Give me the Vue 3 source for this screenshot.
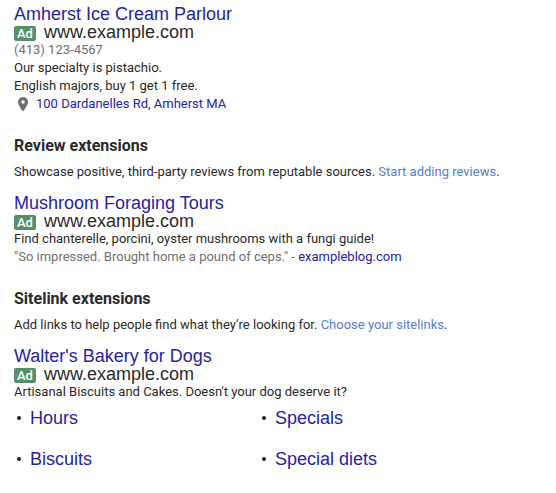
<script setup>
const sitelinks = ['Hours', 'Specials', 'Biscuits', 'Special diets']
</script>

<template>
  <main class="page">
    <article class="ad">
      <a class="title" href="#">Amherst Ice Cream Parlour</a>
      <div class="source"><span class="badge">Ad</span><span class="url">www.example.com</span></div>
      <p class="line muted">(413) 123-4567</p>
      <p class="line">Our specialty is pistachio.</p>
      <p class="line">English majors, buy 1 get 1 free.</p>
      <a class="line address" href="#">
        <svg class="pin" viewBox="0 0 12 16" aria-hidden="true">
          <path fill-rule="evenodd" d="M6 1a5 5 0 0 0-5 5C1 9.500 6 15.500 6 15.500s5-6 5-9.500a5 5 0 0 0-5-5zm0 3.200a1.800 1.800 0 1 1 0 3.600 1.800 1.800 0 0 1 0-3.600z" />
        </svg>
        <span>100 Dardanelles Rd, Amherst MA</span>
      </a>
    </article>

    <section>
      <h2 class="heading">Review extensions</h2>
      <p class="intro">Showcase positive, third-party reviews from reputable sources. <a class="action" href="#">Start adding reviews</a>.</p>
      <article class="ad">
        <a class="title" href="#">Mushroom Foraging Tours</a>
        <div class="source"><span class="badge">Ad</span><span class="url">www.example.com</span></div>
        <p class="line">Find chanterelle, porcini, oyster mushrooms with a fungi guide!</p>
        <p class="line muted">"So impressed. Brought home a pound of ceps." - <a href="#">exampleblog.com</a></p>
      </article>
    </section>

    <section>
      <h2 class="heading">Sitelink extensions</h2>
      <p class="intro">Add links to help people find what they’re looking for. <a class="action" href="#">Choose your sitelinks</a>.</p>
      <article class="ad">
        <a class="title" href="#">Walter's Bakery for Dogs</a>
        <div class="source"><span class="badge">Ad</span><span class="url">www.example.com</span></div>
        <p class="line">Artisanal Biscuits and Cakes. Doesn't your dog deserve it?</p>
        <ul class="sitelinks">
          <li v-for="name in sitelinks" :key="name"><a href="#">{{ name }}</a></li>
        </ul>
      </article>
    </section>
  </main>
</template>

<style>
body {
  background: #fff;
}
</style>

<style scoped>
.page {
  padding: 4px 14px 0;
  font-family: Roboto, sans-serif;
  font-size: 13px;
  color: #2a2a2a;
}
a {
  color: #2424a4;
  text-decoration: none;
}
p, h2, ul {
  margin: 0;
}
.title {
  display: block;
  font-family: "Liberation Sans", Arial, sans-serif;
  font-size: 18px;
  line-height: 20px;
}
.source {
  display: flex;
  align-items: center;
  gap: 8px;
  height: 17px;
}
.badge {
  margin-top: 2px;
  padding: 0 3px;
  border-radius: 2px;
  background: #569068;
  color: #fff;
  font-size: 13px;
  font-weight: 500;
  line-height: 15px;
}
.url {
  font-family: "Liberation Sans", Arial, sans-serif;
  font-size: 18px;
  line-height: 17px;
}
.line {
  line-height: 18px;
}
.muted {
  color: #707070;
}
.address {
  display: flex;
  align-items: center;
  gap: 7px;
}
.pin {
  width: 12px;
  height: 16px;
  margin-left: 3px;
  fill: #707070;
}
.heading {
  margin-top: 23px;
  font-size: 16px;
  font-weight: 700;
  line-height: 20px;
}
.intro {
  margin: 6px 0 11px;
  font-size: 13px;
  line-height: 20px;
}
.action {
  color: #5580cc;
}
.sitelinks {
  display: grid;
  grid-template-columns: 245px 1fr;
  row-gap: 21px;
  padding: 7px 0 0;
  list-style: none;
}
.sitelinks li {
  display: flex;
  align-items: center;
  gap: 9px;
  padding-left: 3px;
  font-family: "Liberation Sans", Arial, sans-serif;
  font-size: 18px;
  line-height: 20px;
}
.sitelinks li::before {
  content: "";
  width: 4px;
  height: 4px;
  border-radius: 50%;
  background: #222;
}
</style>
